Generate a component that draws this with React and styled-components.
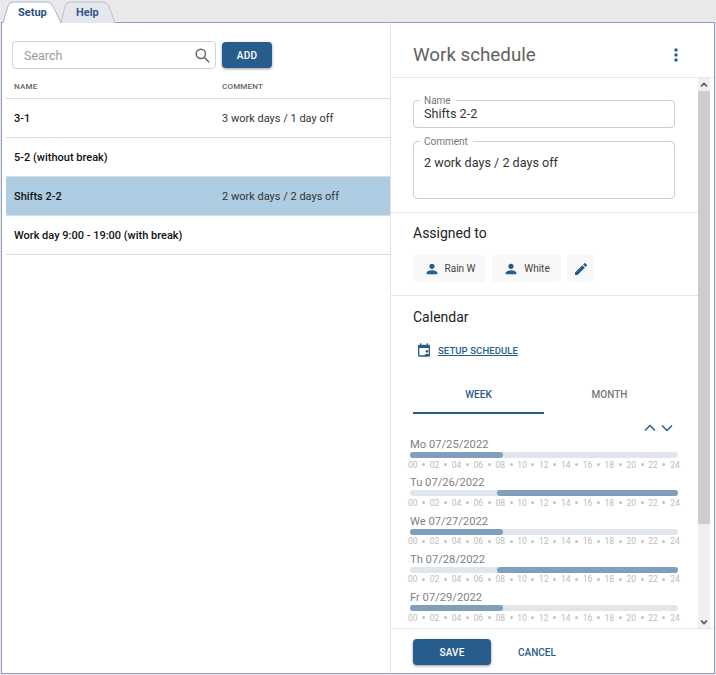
import React from "react";
import styled, { createGlobalStyle } from "styled-components";

const BLUE = "#265d8d";

const Global = createGlobalStyle`
  html, body { margin: 0; padding: 0; background: #e9e9e9; }
  body { font-family: Roboto, "Liberation Sans", sans-serif; color: #222; }
  * { box-sizing: border-box; }
`;

const rows = [
  { name: "3-1", comment: "3 work days / 1 day off" },
  { name: "5-2 (without break)", comment: "" },
  { name: "Shifts 2-2", comment: "2 work days / 2 days off", active: true },
  { name: "Work day 9:00 - 19:00 (with break)", comment: "" },
];

const days = [
  { date: "Mo 07/25/2022", early: true },
  { date: "Tu 07/26/2022" },
  { date: "We 07/27/2022", early: true },
  { date: "Th 07/28/2022" },
  { date: "Fr 07/29/2022", early: true },
];

const hours = ["00", "02", "04", "06", "08", "10", "12", "14", "16", "18", "20", "22", "24"];

function Person() {
  return (
    <svg width="16" height="16" viewBox="0 0 24 24" fill={BLUE}>
      <path d="M12 12c2.2 0 4-1.8 4-4s-1.8-4-4-4-4 1.8-4 4 1.8 4 4 4zm0 2c-2.7 0-8 1.3-8 4v2h16v-2c0-2.7-5.3-4-8-4z" />
    </svg>
  );
}

export default function App() {
  return (
    <Page>
      <Global />
      <TabStrip>
        <Tab $active>
          <TabShape viewBox="0 0 60 22" preserveAspectRatio="none">
            <path d="M1 22 L6 5 Q7 1 12 1 L44 1 Q49 1 51 5 L59 22" fill="#fff" stroke="#a9b8d2" />
          </TabShape>
          <TabLabel $active>Setup</TabLabel>
        </Tab>
        <Tab>
          <TabShape viewBox="0 0 56 22" preserveAspectRatio="none">
            <path d="M1 22 L5 5 Q6 1 11 1 L42 1 Q47 1 49 5 L55 22" fill="#e4e7ec" stroke="#b6c1d4" />
          </TabShape>
          <TabLabel>Help</TabLabel>
        </Tab>
      </TabStrip>
      <Frame>
        <ListPane>
          <Toolbar>
            <SearchBox>
              <SearchText>Search</SearchText>
              <svg width="15" height="15" viewBox="0 0 18 18" fill="none" stroke="#666" strokeWidth="1.7">
                <circle cx="7" cy="7" r="5.6" />
                <path d="M11 11l6 6" />
              </svg>
            </SearchBox>
            <AddButton>ADD</AddButton>
          </Toolbar>
          <HeadRow>
            <HeadCell>NAME</HeadCell>
            <HeadCell>COMMENT</HeadCell>
          </HeadRow>
          {rows.map((r) => (
            <Row key={r.name} $active={r.active}>
              <NameCell>{r.name}</NameCell>
              <CommentCell>{r.comment}</CommentCell>
            </Row>
          ))}
        </ListPane>
        <DetailPane>
          <DetailHead>
            <Title>Work schedule</Title>
            <svg width="4" height="14" viewBox="0 0 4 14" fill={BLUE}>
              <circle cx="2" cy="2" r="1.7" />
              <circle cx="2" cy="7" r="1.7" />
              <circle cx="2" cy="12" r="1.7" />
            </svg>
          </DetailHead>
          <ScrollArea>
            <ScrollContent>
              <FormSection>
                <Field $height={28}>
                  <FieldLabel>Name</FieldLabel>
                  <FieldValue>Shifts 2-2</FieldValue>
                </Field>
                <Field $height={58}>
                  <FieldLabel>Comment</FieldLabel>
                  <FieldValue $tall>2 work days / 2 days off</FieldValue>
                </Field>
              </FormSection>
              <AssignedSection>
                <SectionTitle>Assigned to</SectionTitle>
                <Chips>
                  <Chip $width={73}>
                    <Person />
                    <ChipText>Rain W</ChipText>
                  </Chip>
                  <Chip $width={69}>
                    <Person />
                    <ChipText>White</ChipText>
                  </Chip>
                  <Chip $width={27}>
                    <svg width="16" height="16" viewBox="0 0 24 24" fill={BLUE}>
                      <path d="M3 17.25V21h3.75L17.81 9.94l-3.75-3.75L3 17.25zM20.71 7.04a1 1 0 0 0 0-1.41l-2.34-2.34a1 1 0 0 0-1.41 0l-1.83 1.83 3.75 3.75 1.83-1.83z" />
                    </svg>
                  </Chip>
                </Chips>
              </AssignedSection>
              <CalendarSection>
                <SectionTitle>Calendar</SectionTitle>
                <SetupLink>
                  <svg width="16" height="16" viewBox="0 0 24 24" fill={BLUE}>
                    <path d="M19 4h-1V2h-2v2H8V2H6v2H5a2 2 0 0 0-2 2v14a2 2 0 0 0 2 2h14a2 2 0 0 0 2-2V6a2 2 0 0 0-2-2zm0 16H5V9h14v11z" />
                    <circle cx="16.500" cy="14" r="2" />
                    <path d="M12.500 21c0-2.200 2.600-3.500 4-3.500s4 1.300 4 3.500z" />
                  </svg>
                  <LinkText>SETUP SCHEDULE</LinkText>
                </SetupLink>
                <ViewTabs>
                  <ViewTab $active>WEEK</ViewTab>
                  <ViewTab>MONTH</ViewTab>
                </ViewTabs>
                <Pager>
                  <svg width="12" height="8" viewBox="0 0 12 8" fill="none" stroke={BLUE} strokeWidth="1.5">
                    <path d="M1 6.500l5-5 5 5" />
                  </svg>
                  <svg width="12" height="8" viewBox="0 0 12 8" fill="none" stroke={BLUE} strokeWidth="1.5">
                    <path d="M1 1.500l5 5 5-5" />
                  </svg>
                </Pager>
                <DayList>
                  {days.map((d) => (
                    <Day key={d.date}>
                      <DayDate>{d.date}</DayDate>
                      <Track>
                        <Fill $early={d.early} />
                      </Track>
                      <Hours>
                        {hours.map((h, i) => (
                          <React.Fragment key={h}>
                            {i > 0 && <Dot />}
                            <Hour>{h}</Hour>
                          </React.Fragment>
                        ))}
                      </Hours>
                    </Day>
                  ))}
                </DayList>
              </CalendarSection>
            </ScrollContent>
            <Scrollbar>
              <ScrollButton>
                <svg width="8" height="6" viewBox="0 0 8 6" fill="none" stroke="#505050" strokeWidth="1.6">
                  <path d="M1 4.500l3-3 3 3" />
                </svg>
              </ScrollButton>
              <Thumb />
              <ScrollSpacer />
              <ScrollButton>
                <svg width="8" height="6" viewBox="0 0 8 6" fill="none" stroke="#505050" strokeWidth="1.6">
                  <path d="M1 1.500l3 3 3-3" />
                </svg>
              </ScrollButton>
            </Scrollbar>
          </ScrollArea>
          <Footer>
            <SaveButton>SAVE</SaveButton>
            <CancelButton>CANCEL</CancelButton>
          </Footer>
        </DetailPane>
      </Frame>
    </Page>
  );
}

const Page = styled.div`
  width: 716px;
  height: 675px;
  display: flex;
  flex-direction: column;
  overflow: hidden;
`;

const TabStrip = styled.div`
  height: 23px;
  flex: none;
  display: flex;
  padding: 1px 0 0 2px;
  margin-bottom: -1px;
  position: relative;
  z-index: 1;
`;

const Tab = styled.div`
  position: relative;
  height: 22px;
  width: ${(p) => (p.$active ? "60px" : "56px")};
  margin-right: ${(p) => (p.$active ? "-2px" : "0")};
  z-index: ${(p) => (p.$active ? 2 : 1)};
  display: flex;
  align-items: center;
  padding-left: 16px;
`;

const TabShape = styled.svg`
  position: absolute;
  inset: 0;
  width: 100%;
  height: 100%;
`;

const TabLabel = styled.span`
  position: relative;
  font-size: 11px;
  font-weight: 700;
  color: ${(p) => (p.$active ? "#2c4f86" : "#33558c")};
  padding-top: 1px;
`;

const Frame = styled.div`
  flex: 1;
  min-height: 0;
  margin: 0 1px 1px 1px;
  display: flex;
  background: #fff;
  border: 1px solid #8d9dc1;
`;

const ListPane = styled.div`
  width: 389px;
  flex: none;
  border-right: 1px solid #e4e4e4;
  padding-left: 4px;
`;

const Toolbar = styled.div`
  display: flex;
  align-items: center;
  gap: 6px;
  padding: 18px 0 0 6px;
`;

const SearchBox = styled.div`
  width: 204px;
  height: 28px;
  border: 1px solid #d2d2d2;
  border-radius: 4px;
  display: flex;
  align-items: center;
  justify-content: space-between;
  padding: 0 5px 0 11px;
`;

const SearchText = styled.span`
  font-size: 12.500px;
  color: #9a9a9a;
`;

const Button = styled.button`
  border: none;
  border-radius: 4px;
  background: ${BLUE};
  color: #fff;
  font-family: inherit;
  font-weight: 500;
  font-size: 10px;
  letter-spacing: 0.2px;
  box-shadow: 0 1px 3px rgba(0, 0, 0, 0.4);
  padding: 0;
`;

const AddButton = styled(Button)`
  width: 50px;
  height: 26px;
`;

const HeadRow = styled.div`
  display: grid;
  grid-template-columns: 208px 1fr;
  height: 30px;
  align-items: center;
  padding: 5px 0 0 8px;
  border-bottom: 1px solid #dcdcdc;
`;

const HeadCell = styled.span`
  font-size: 8px;
  font-weight: 500;
  color: #666;
  letter-spacing: 0.2px;
`;

const Row = styled.div`
  display: grid;
  grid-template-columns: 208px 1fr;
  height: 39px;
  align-items: center;
  padding-left: 8px;
  border-bottom: 1px solid #dcdcdc;
  background: ${(p) => (p.$active ? "#aecde2" : "#fff")};
`;

const NameCell = styled.span`
  font-size: 11px;
  font-weight: 500;
  white-space: nowrap;
  color: #111;
`;

const CommentCell = styled.span`
  font-size: 11px;
  color: #333;
  white-space: nowrap;
`;

const DetailPane = styled.div`
  flex: 1;
  min-width: 0;
  display: flex;
  flex-direction: column;
`;

const DetailHead = styled.div`
  height: 55px;
  flex: none;
  display: flex;
  align-items: center;
  justify-content: space-between;
  padding: 10px 36px 0 22px;
  border-bottom: 1px solid #e6e6e6;
`;

const Title = styled.h1`
  margin: 0;
  font-size: 18.750px;
  font-weight: 400;
  color: #616161;
`;

const ScrollArea = styled.div`
  flex: 1;
  min-height: 0;
  display: flex;
  padding-right: 4px;
  border-bottom: 1px solid #e6e6e6;
`;

const ScrollContent = styled.div`
  flex: 1;
  min-width: 0;
  overflow: hidden;
`;

const FormSection = styled.section`
  padding: 22px 23px 13px 22px;
  display: flex;
  flex-direction: column;
  gap: 13px;
  border-bottom: 1px solid #e6e6e6;
`;

const Field = styled.div`
  position: relative;
  height: ${(p) => p.$height}px;
  border: 1px solid #cfcfcf;
  border-radius: 4px;
  padding: 0 10px;
`;

const FieldLabel = styled.span`
  position: absolute;
  top: -6px;
  left: 6px;
  padding: 0 5px 0 4px;
  background: #fff;
  font-size: 10px;
  line-height: 11px;
  color: #777;
`;

const FieldValue = styled.div`
  font-size: 12.600px;
  color: #333;
  margin-top: ${(p) => (p.$tall ? "13px" : "5px")};
  line-height: 16px;
`;

const AssignedSection = styled.section`
  padding: 10px 23px 13px 22px;
  border-bottom: 1px solid #e6e6e6;
`;

const SectionTitle = styled.h2`
  margin: 0;
  font-size: 14px;
  font-weight: 400;
  line-height: 20px;
  color: #222;
`;

const Chips = styled.div`
  display: flex;
  gap: 6px;
  margin-top: 12px;
`;

const Chip = styled.div`
  width: ${(p) => p.$width}px;
  height: 27px;
  border-radius: 4px;
  background: #f8f8f8;
  display: flex;
  align-items: center;
  justify-content: center;
  gap: 5px;
`;

const ChipText = styled.span`
  font-size: 10px;
  color: #444;
`;

const CalendarSection = styled.section`
  padding: 11px 23px 0 22px;
`;

const SetupLink = styled.div`
  display: flex;
  align-items: center;
  gap: 6px;
  margin: 14px 0 0 3px;
  height: 18px;
`;

const LinkText = styled.span`
  font-size: 9.500px;
  font-weight: 500;
  color: ${BLUE};
  text-decoration: underline;
  letter-spacing: 0.1px;
`;

const ViewTabs = styled.div`
  display: grid;
  grid-template-columns: 1fr 1fr;
  margin-top: 18px;
`;

const ViewTab = styled.div`
  height: 37px;
  display: flex;
  align-items: center;
  justify-content: center;
  font-size: 10px;
  font-weight: 500;
  color: ${(p) => (p.$active ? BLUE : "#777")};
  border-bottom: 2px solid ${(p) => (p.$active ? BLUE : "transparent")};
`;

const Pager = styled.div`
  display: flex;
  justify-content: flex-end;
  gap: 5px;
  padding-right: 2px;
  margin-top: 10px;
  height: 10px;
`;

const DayList = styled.div`
  display: flex;
  flex-direction: column;
  margin: 1px -5px 0 -5px;
`;

const Day = styled.div`
  height: 38.300px;
  padding-top: 3px;
`;

const DayDate = styled.div`
  font-size: 11.200px;
  line-height: 14px;
  color: #7f7f7f;
  padding-left: 2px;
`;

const Track = styled.div`
  height: 6px;
  margin: 0 2px;
  border-radius: 3px;
  background: #e0e6eb;
  display: flex;
`;

const Fill = styled.div`
  height: 6px;
  border-radius: 3px;
  background: #7f9fbd;
  width: ${(p) => (p.$early ? "34.700%" : "67.500%")};
  margin-left: ${(p) => (p.$early ? "0" : "auto")};
`;

const Hours = styled.div`
  display: flex;
  justify-content: space-between;
  align-items: center;
  margin-top: 1px;
  height: 11px;
`;

const Hour = styled.span`
  font-size: 8.500px;
  color: #bcbcbc;
`;

const Dot = styled.span`
  width: 3px;
  height: 3px;
  border-radius: 50%;
  background: #c4c4c4;
`;

const Scrollbar = styled.div`
  width: 12px;
  flex: none;
  display: flex;
  flex-direction: column;
  background: #f0f0f0;
`;

const ScrollButton = styled.div`
  height: 13px;
  flex: none;
  display: flex;
  align-items: center;
  justify-content: center;
`;

const Thumb = styled.div`
  height: 433px;
  flex: none;
  background: #cdcdcd;
`;

const ScrollSpacer = styled.div`
  flex: 1;
`;

const Footer = styled.div`
  height: 44px;
  flex: none;
  display: flex;
  align-items: center;
  gap: 27px;
  padding: 2px 0 0 22px;
`;

const SaveButton = styled(Button)`
  width: 78px;
  height: 26px;
`;

const CancelButton = styled.span`
  font-size: 10px;
  font-weight: 500;
  color: ${BLUE};
`;
